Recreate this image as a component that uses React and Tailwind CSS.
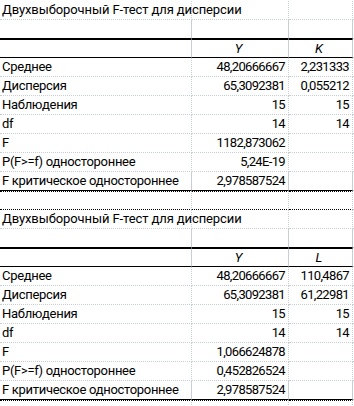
import React from 'react';

const tests = [
  {
    col: 'K',
    rows: [
      ['Среднее', '48,20666667', '2,231333'],
      ['Дисперсия', '65,3092381', '0,055212'],
      ['Наблюдения', '15', '15'],
      ['df', '14', '14'],
      ['F', '1182,873062', ''],
      ['P(F>=f) одностороннее', '5,24E-19', ''],
      ['F критическое одностороннее', '2,978587524', ''],
    ],
  },
  {
    col: 'L',
    rows: [
      ['Среднее', '48,20666667', '110,4867'],
      ['Дисперсия', '65,3092381', '61,22981'],
      ['Наблюдения', '15', '15'],
      ['df', '14', '14'],
      ['F', '1,066624878', ''],
      ['P(F>=f) одностороннее', '0,452826524', ''],
      ['F критическое одностороннее', '2,978587524', ''],
    ],
  },
];

// one sheet row: A | B | C | D, 19px tall, gridline at the bottom
const Row = ({ a, b, c, top, bottom, italicHead, spanA }) => {
  const line = bottom ? 'border-b border-black' : 'border-b border-dotted border-[#c9ced6]';
  const tLine = top ? 'border-t border-black' : '';
  const cell = `h-[19px] ${line} ${tLine} flex items-center overflow-visible whitespace-nowrap`;
  const num = italicHead ? 'justify-center italic' : 'justify-end tracking-[-0.65px]';
  return (
    <div className="flex">
      <div className={`${cell} w-[192px] pl-[2px] tracking-[-0.3px] border-r border-r-dotted border-r-[#c9ced6] ${spanA ? 'relative z-10' : ''}`}>
        {a}
      </div>
      <div className={`${cell} w-[97px] pr-[3px] border-r border-r-dotted border-r-[#c9ced6] ${num}`}>
        {b}
      </div>
      <div className={`${cell} w-[64px] pr-[3px] border-r border-r-dotted border-r-[#c9ced6] ${num}`}>
        {c}
      </div>
      <div className="h-[19px] flex-1 border-b border-dotted border-[#c9ced6]" />
    </div>
  );
};

const Block = ({ test, first }) => (
  <>
    {!first && <Row top />}
    <Row
      a={<span className="absolute left-[2px] tracking-[-0.1px]">Двухвыборочный F-тест для дисперсии</span>}
      spanA
    />
    <Row bottom />
    <Row top bottom italicHead b="Y" c={test.col} />
    {test.rows.map((r, i) => (
      <Row key={i} a={r[0]} b={r[1]} c={r[2]} bottom={i === test.rows.length - 1} />
    ))}
  </>
);

const App = () => {
  return (
    <div
      className="w-[354px] h-[406px] overflow-hidden bg-white text-black text-[13px] pt-[1px]"
      style={{ fontFamily: 'Roboto, "Noto Sans", sans-serif' }}
    >
      <Block test={tests[0]} first />
      <Block test={tests[1]} />
      <Row top />
    </div>
  );
};

export default App;
